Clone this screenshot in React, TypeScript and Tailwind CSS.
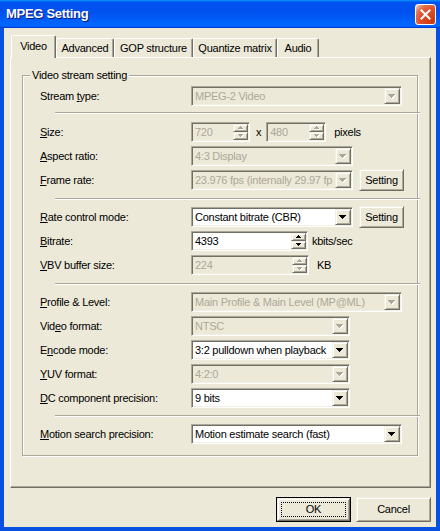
import type { ReactNode } from 'react';

const sunken =
  'border border-t-[#aca899] border-l-[#aca899] border-r-white border-b-white shadow-[inset_1px_1px_0_#716f64,inset_-1px_-1px_0_#f1efe2] p-[1px]';
const raised =
  'border border-t-[#f1efe2] border-l-[#f1efe2] border-r-[#716f64] border-b-[#716f64] shadow-[inset_1px_1px_0_#fff,inset_-1px_-1px_0_#aca899] bg-[#ece9d8]';

function DownArrow({ disabled }: { disabled?: boolean }) {
  const d = 'M0 0h7v1H0z M1 1h5v1H1z M2 2h3v1H2z M3 3h1v1H3z';
  return (
    <svg width="8" height="5" viewBox="0 0 8 5">
      {disabled && <path d={d} fill="#fff" transform="translate(1 1)" />}
      <path d={d} fill={disabled ? '#aca899' : '#000'} />
    </svg>
  );
}

function SpinArrow({ up, disabled }: { up?: boolean; disabled?: boolean }) {
  const d = up ? 'M2 0h1v1H2z M1 1h3v1H1z M0 2h5v1H0z' : 'M0 0h5v1H0z M1 1h3v1H1z M2 2h1v1H2z';
  return (
    <svg width="6" height="4" viewBox="0 0 6 4">
      {disabled && <path d={d} fill="#fff" transform="translate(1 1)" />}
      <path d={d} fill={disabled ? '#aca899' : '#000'} />
    </svg>
  );
}

function Combo({ className, value, disabled }: { className: string; value: string; disabled?: boolean }) {
  return (
    <div className={`${sunken} flex h-[20px] shrink-0 ${className}`}>
      <div
        className={`flex flex-1 items-center overflow-hidden whitespace-nowrap pl-[2px] ${
          disabled ? 'bg-[#ece9d8] text-[#aca899]' : 'bg-white text-black'
        }`}
      >
        {value}
      </div>
      <div className={`${raised} flex w-[16px] shrink-0 items-center justify-center`}>
        <DownArrow disabled={disabled} />
      </div>
    </div>
  );
}

function SpinEdit({ className, value, disabled }: { className: string; value: string; disabled?: boolean }) {
  return (
    <div className={`${sunken} flex h-[20px] shrink-0 ${className}`}>
      <div
        className={`flex flex-1 items-center pl-[2px] ${
          disabled ? 'bg-[#ece9d8] text-[#aca899]' : 'bg-white text-black'
        }`}
      >
        {value}
      </div>
      <div className="flex w-[15px] flex-col">
        <div className={`${raised} flex flex-1 items-center justify-center`}>
          <SpinArrow up disabled={disabled} />
        </div>
        <div className={`${raised} flex flex-1 items-center justify-center`}>
          <SpinArrow disabled={disabled} />
        </div>
      </div>
    </div>
  );
}

function SettingButton() {
  return (
    <div className={`${raised} ml-[6px] flex h-[22px] w-[45px] items-center justify-center`}>Setting</div>
  );
}

function Row({ label, children }: { label: ReactNode; children: ReactNode }) {
  return (
    <div className="flex h-[24px] items-center">
      <div className="w-[151px] shrink-0">{label}</div>
      {children}
    </div>
  );
}

function Sep({ className }: { className: string }) {
  return <div className={`ml-[15px] h-[2px] w-[365px] border-t border-b border-t-[#aca899] border-b-white ${className}`} />;
}

function L({ pre = '', k, post }: { pre?: string; k: string; post: string }) {
  return (
    <span>
      {pre}
      <span className="underline">{k}</span>
      {post}
    </span>
  );
}

const tabs = [
  { name: 'Video', w: 'w-[45px]' },
  { name: 'Advanced', w: 'w-[58px]' },
  { name: 'GOP structure', w: 'w-[79px]' },
  { name: 'Quantize matrix', w: 'w-[84px]' },
  { name: 'Audio', w: 'w-[42px]' },
];

export default function App() {
  return (
    <div className="flex h-[531px] w-[440px] flex-col overflow-hidden bg-[#0a50e0] font-['Liberation_Sans',Arial,sans-serif] text-[11px] tracking-[-0.25px] text-black">
      {/* title bar */}
      <div className="flex h-[28px] shrink-0 items-center justify-between bg-[linear-gradient(180deg,#0997ff,#0053ee_8%,#0050ee_40%,#06f_88%,#06f_93%,#005bff_95%,#003dd7_96%,#003dd7)] pl-[6px] pr-[4px]">
        <span className="text-[13px] font-bold tracking-[-0.3px] text-white [text-shadow:1px_1px_0_#0a1883]">
          MPEG Setting
        </span>
        <div className="flex h-[21px] w-[21px] items-center justify-center rounded-[3px] border border-white bg-[radial-gradient(circle_at_90%_90%,#c83a10_0%,#e0502b_55%,#e2704e_75%,#f4b39c_92%,#fff_100%)]">
          <svg width="11" height="11" viewBox="0 0 11 11">
            <path d="M1.5 1.5l8 8M9.5 1.5l-8 8" stroke="#fff" strokeWidth="2" strokeLinecap="square" />
          </svg>
        </div>
      </div>

      {/* body */}
      <div className="mx-[4px] mb-[4px] flex flex-1 flex-col bg-[#ece9d8] pl-[6px] pr-[5px]">
        {/* tabs */}
        <div className="mt-[7px] flex h-[22px] items-end pl-[1px]">
          {tabs.map((t, i) =>
            i === 0 ? (
              <div
                key={t.name}
                className={`relative z-10 -mb-[1px] flex h-[23px] ${t.w} items-center justify-center rounded-t-[2px] border-t border-l border-r border-t-white border-l-white border-r-[#716f64] bg-[#ece9d8] pb-[2px] shadow-[inset_-1px_0_0_#aca899]`}
              >
                {t.name}
              </div>
            ) : (
              <div
                key={t.name}
                className={`flex h-[19px] ${t.w} items-center justify-center rounded-t-[2px] border-t border-l border-r border-t-white border-l-white border-r-[#716f64] shadow-[inset_-1px_0_0_#aca899]`}
              >
                {t.name}
              </div>
            ),
          )}
        </div>

        {/* panel */}
        <div className="h-[431px] w-[421px] border border-t-white border-l-white border-r-[#716f64] border-b-[#716f64] pl-[11px] pt-[17px] shadow-[inset_-1px_-1px_0_#aca899]">
          <div className="flex h-[381px] w-[396px] flex-col border border-[#aca899] pl-[17px] shadow-[inset_1px_1px_0_#fff,1px_1px_0_#fff]">
            <span className="-mt-[7px] -ml-[10px] self-start bg-[#ece9d8] px-[2px] leading-[13px]">
              Video stream setting
            </span>

            <div className="mt-[2px]">
              <Row label={<L pre="Stream " k="t" post="ype:" />}>
                <Combo className="w-[211px]" value="MPEG-2 Video" disabled />
              </Row>
            </div>

            <Sep className="mt-[4px]" />

            <div className="mt-[6px]">
              <Row label={<L k="S" post="ize:" />}>
                <SpinEdit className="w-[59px]" value="720" disabled />
                <span className="ml-[6px]">x</span>
                <SpinEdit className="ml-[5px] w-[60px]" value="480" disabled />
                <span className="ml-[8px]">pixels</span>
              </Row>
              <Row label={<L k="A" post="spect ratio:" />}>
                <Combo className="w-[162px]" value="4:3 Display" disabled />
              </Row>
              <Row label={<L k="F" post="rame rate:" />}>
                <Combo className="w-[162px]" value="23.976 fps (internally 29.97 fp" disabled />
                <SettingButton />
              </Row>
            </div>

            <Sep className="mt-[6px]" />

            <div className="mt-[5px]">
              <Row label={<L k="R" post="ate control mode:" />}>
                <Combo className="w-[162px]" value="Constant bitrate (CBR)" />
                <SettingButton />
              </Row>
              <Row label={<L k="B" post="itrate:" />}>
                <SpinEdit className="w-[117px]" value="4393" />
                <span className="ml-[4px]">kbits/sec</span>
              </Row>
              <Row label={<L k="V" post="BV buffer size:" />}>
                <SpinEdit className="w-[118px]" value="224" disabled />
                <span className="ml-[8px]">KB</span>
              </Row>
            </div>

            <Sep className="mt-[6px]" />

            <div className="mt-[5px]">
              <Row label={<L k="P" post="rofile & Level:" />}>
                <Combo className="w-[211px]" value="Main Profile & Main Level (MP@ML)" disabled />
              </Row>
              <Row label={<L pre="Vid" k="e" post="o format:" />}>
                <Combo className="w-[159px]" value="NTSC" disabled />
              </Row>
              <Row label={<L pre="E" k="n" post="code mode:" />}>
                <Combo className="w-[159px]" value="3:2 pulldown when playback" />
              </Row>
              <Row label={<L k="Y" post="UV format:" />}>
                <Combo className="w-[159px]" value="4:2:0" disabled />
              </Row>
              <Row label={<L k="D" post="C component precision:" />}>
                <Combo className="w-[159px]" value="9 bits" />
              </Row>
            </div>

            <Sep className="mt-[5px]" />

            <div className="mt-[5px]">
              <Row label={<L k="M" post="otion search precision:" />}>
                <Combo className="w-[211px]" value="Motion estimate search (fast)" />
              </Row>
            </div>
          </div>
        </div>

        {/* buttons */}
        <div className="mt-[9px] flex justify-end gap-[5px]">
          <div className="flex h-[25px] w-[75px] border border-black">
            <div className={`${raised} flex flex-1 p-[3px]`}>
              <div className="flex flex-1 items-center justify-center border border-dotted border-black">OK</div>
            </div>
          </div>
          <div className={`${raised} flex h-[25px] w-[75px] items-center justify-center`}>Cancel</div>
        </div>
      </div>
    </div>
  );
}
